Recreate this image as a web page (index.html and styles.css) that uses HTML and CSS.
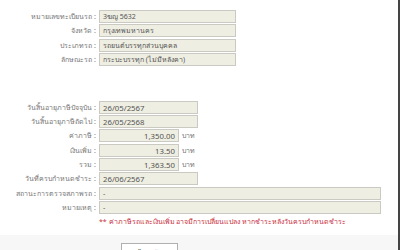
FILE: index.html
```html
<!DOCTYPE html>
<html lang="th">
<head>
    <meta charset="UTF-8">
    <title>ข้อมูลรถ</title>
<link rel="stylesheet" href="styles.css">
</head>
<body>
    <div id="page">
        <div class="form-block">
            <div class="lbl">หมายเลขทะเบียนรถ :</div>
            <div class="box w-mid">3ฆญ 5632</div>
            <div class="lbl">จังหวัด :</div>
            <div class="box w-mid">กรุงเทพมหานคร</div>
            <div class="lbl">ประเภทรถ :</div>
            <div class="box w-mid">รถยนต์บรรทุกส่วนบุคคล</div>
            <div class="lbl">ลักษณะรถ :</div>
            <div class="box w-mid">กระบะบรรทุก (ไม่มีหลังคา)</div>
        </div>

        <div class="form-block second">
            <div class="lbl">วันสิ้นอายุภาษีปัจจุบัน :</div>
            <div class="box w-short digits">26/05/2567</div>
            <div class="lbl">วันสิ้นอายุภาษีถัดไป :</div>
            <div class="box w-short digits">26/05/2568</div>
            <div class="lbl">ค่าภาษี :</div>
            <div class="money"><div class="box num digits">1,350.00</div><span class="unit">บาท</span></div>
            <div class="lbl">เงินเพิ่ม :</div>
            <div class="money"><div class="box num digits">13.50</div><span class="unit">บาท</span></div>
            <div class="lbl">รวม :</div>
            <div class="money"><div class="box num digits">1,363.50</div><span class="unit">บาท</span></div>
            <div class="lbl">วันที่ครบกำหนดชำระ :</div>
            <div class="box w-short digits">26/06/2567</div>
            <div class="lbl">สถานะการตรวจสภาพรถ :</div>
            <div class="box w-long">-</div>
            <div class="lbl">หมายเหตุ :</div>
            <div class="box w-long">-</div>
            <div></div>
            <div class="note">** ค่าภาษีรถและเงินเพิ่ม อาจมีการเปลี่ยนแปลง หากชำระหลังวันครบกำหนดชำระ</div>
        </div>
    </div>

    <div id="footer">
        <button class="btn-back">ย้อนกลับ</button>
    </div>
</body>
</html>
```

FILE: styles.css
```css
body {
    margin: 0;
    font-family: Tahoma, "Noto Sans", "DejaVu Sans", sans-serif;
    font-size: 7px;
    color: #555;
    background: #fff;
    border-right: 2px solid #444;
    height: 250px;
    box-sizing: border-box;
    overflow: hidden;
}

#page {
    padding-top: 10px;
    height: 235px;
    box-sizing: border-box;
}

.form-block {
    display: grid;
    grid-template-columns: 99px auto;
    grid-auto-rows: 13px;
    row-gap: 1.3px;
    align-items: center;
}

.form-block.second {
    margin-top: 35px;
}

.lbl {
    height: 13px;
    line-height: 13px;
    text-align: right;
    padding-right: 3px;
    white-space: nowrap;
    color: #777;
}

.box {
    height: 13px;
    line-height: 12px;
    box-sizing: border-box;
    background: #eeeee2;
    border: 1px solid #cacac2;
    padding: 0 3px;
    color: #555;
    white-space: nowrap;
    overflow: hidden;
}

.digits {
    font-size: 7.8px;
}

.w-mid { width: 137px; }
.w-short { width: 99px; }
.w-long { width: 282px; }

.money {
    display: flex;
    align-items: center;
}

.money .num {
    width: 80px;
    text-align: right;
}

.unit {
    margin-left: 3px;
    color: #777;
}

.note {
    height: 13px;
    line-height: 13px;
    color: #c8303e;
    white-space: nowrap;
}

#footer {
    height: 15px;
    background: #f7f7f7;
    padding-left: 121px;
    padding-top: 8px;
    box-sizing: border-box;
    overflow: hidden;
}

.btn-back {
    display: block;
    width: 57px;
    height: 18px;
    font-family: inherit;
    font-size: 7px;
    background: #fff;
    border: 1px solid #b0b0b0;
    color: #333;
    padding: 0;
}
```
